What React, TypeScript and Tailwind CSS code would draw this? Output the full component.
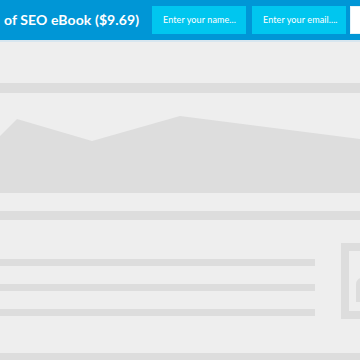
import React from "react";

function Field({ placeholder }: { placeholder: string }) {
  return (
    <div className="w-[94px] h-[28px] shrink-0 bg-[#00c6ef] flex items-center pl-[11px] text-white text-[9px] tracking-[0.1px] font-['Lato',sans-serif] whitespace-nowrap overflow-hidden">
      {placeholder}
    </div>
  );
}

export default function App() {
  return (
    <div className="w-[360px] h-[360px] overflow-hidden bg-[#eeeeee]">
      {/* Top offer bar */}
      <div className="h-[40px] bg-[#0096d6] flex items-center overflow-hidden whitespace-nowrap">
        <span className="w-[135px] shrink-0 ml-[4px] text-white font-bold text-[14px] tracking-[0.1px] font-['Lato',sans-serif] leading-none">
          of SEO eBook ($9.69)
        </span>
        <div className="ml-[13px] flex gap-[6px]">
          <Field placeholder="Enter your name..." />
          <Field placeholder="Enter your email...." />
          <div className="w-[60px] h-[28px] shrink-0 ml-[-2px] bg-white border border-[#e4f3fa]" />
        </div>
      </div>
      <div className="h-[2px] bg-[#d8e6ef]" />

      {/* Placeholder page */}
      <div className="mt-[41px] h-[10px] bg-[#dddddd]" />
      <svg width="360" height="100" viewBox="0 0 360 100" className="block">
        <polygon points="0,43 17,26 92,48 180,23 360,46 360,100 0,100" fill="#dddddd" />
      </svg>
      <div className="mt-[18px] h-[9px] bg-[#dddddd]" />

      <div className="mt-[23px] flex items-start">
        <div className="w-[315px] pt-[16px] flex flex-col gap-[18px] shrink-0">
          <div className="h-[7px] bg-[#dddddd]" />
          <div className="h-[7px] bg-[#dddddd]" />
          <div className="h-[7px] bg-[#dddddd]" />
        </div>
        <div className="ml-[26px] w-[80px] h-[76px] shrink-0 border-[8px] border-[#dddddd] pt-[27px] pl-[7px]">
          <div className="w-[40px] h-[24px] bg-[#dddddd] rounded-tl-[6px]" />
        </div>
      </div>

      <div className="mt-[34px] h-[10px] bg-[#dddddd]" />
    </div>
  );
}
